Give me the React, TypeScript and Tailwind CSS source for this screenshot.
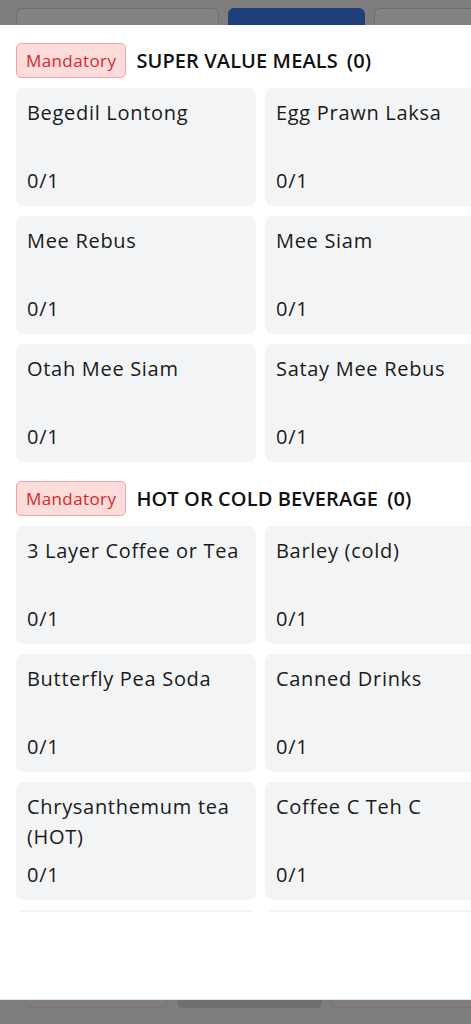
import React from "react";

type Section = { title: string; items: string[]; more?: number };

const sections: Section[] = [
  {
    title: "SUPER VALUE MEALS",
    items: ["Begedil Lontong", "Egg Prawn Laksa", "Mee Rebus", "Mee Siam", "Otah Mee Siam", "Satay Mee Rebus"],
  },
  {
    title: "HOT OR COLD BEVERAGE",
    items: [
      "3 Layer Coffee or Tea",
      "Barley (cold)",
      "Butterfly Pea Soda",
      "Canned Drinks",
      "Chrysanthemum tea (HOT)",
      "Coffee C Teh C",
    ],
    // next row sits under the scroll edge, only its top shows
    more: 2,
  },
];

function ItemCard({ name }: { name?: string }) {
  return (
    <div className="flex h-[118px] flex-col justify-between rounded-lg bg-[#f3f4f6] px-[11px] py-[10px] text-[20px] leading-[30px] tracking-[0.7px] text-[#1a1a1a]">
      {name && (
        <>
          <span>{name}</span>
          <span>0/1</span>
        </>
      )}
    </div>
  );
}

function MenuSection({ section }: { section: Section }) {
  return (
    <section className="flex flex-col gap-[10px]">
      <div className="flex items-center gap-[10px]">
        <span className="flex h-[35px] items-center rounded-[5px] border border-[#f2a3a3] bg-[#fddcdc] px-[9px] text-[17px] tracking-[0.4px] text-[#dc2626]">
          Mandatory
        </span>
        <h2 className="text-[20px] font-semibold tracking-[0.1px] text-[#111]">
          {section.title}
          <span className="ml-[9px]">(0)</span>
        </h2>
      </div>
      <div className="grid grid-cols-[240px_240px] gap-x-[9px] gap-y-[10px]">
        {section.items.map((item) => (
          <ItemCard key={item} name={item} />
        ))}
        {Array.from({ length: section.more ?? 0 }).map((_, i) => (
          <ItemCard key={`more-${i}`} />
        ))}
      </div>
    </section>
  );
}

export default function App() {
  return (
    <div
      className="flex h-[1024px] w-[471px] flex-col overflow-hidden bg-[#7e7e7e]"
      style={{ fontFamily: '"Open Sans", "Noto Sans", sans-serif' }}
    >
      {/* dimmed tabs behind the sheet */}
      <div className="flex h-[25px] shrink-0 items-end gap-[9px] px-4">
        <div className="h-[17px] w-[203px] rounded-t-md border border-b-0 border-[#6f6f6f] bg-[#838383]" />
        <div className="h-[17px] w-[137px] rounded-t-md bg-[#1f3f7b]" />
        <div className="h-[17px] flex-1 -mr-4 rounded-tl-md border border-b-0 border-r-0 border-[#6f6f6f] bg-[#838383]" />
      </div>

      {/* sheet */}
      <div className="flex h-[975px] shrink-0 flex-col bg-white">
        <div className="h-[887px] overflow-hidden px-4 pt-[18px]">
          <div className="flex flex-col gap-[19px]">
            {sections.map((s) => (
              <MenuSection key={s.title} section={s} />
            ))}
          </div>
        </div>
        <div className="flex-1 border-b border-[#e5e5e5]" />
      </div>

      {/* dimmed footer buttons */}
      <div className="flex flex-1 gap-[9px] pl-[24px]">
        <div className="h-[8px] w-[144px] rounded-b-md border border-t-0 border-[#8b6d6d]" />
        <div className="h-[8px] w-[145px] rounded-b-md bg-[#6f6f6f]" />
        <div className="h-[8px] flex-1 rounded-bl-md border border-t-0 border-r-0 border-[#8b6d6d]" />
      </div>
    </div>
  );
}
